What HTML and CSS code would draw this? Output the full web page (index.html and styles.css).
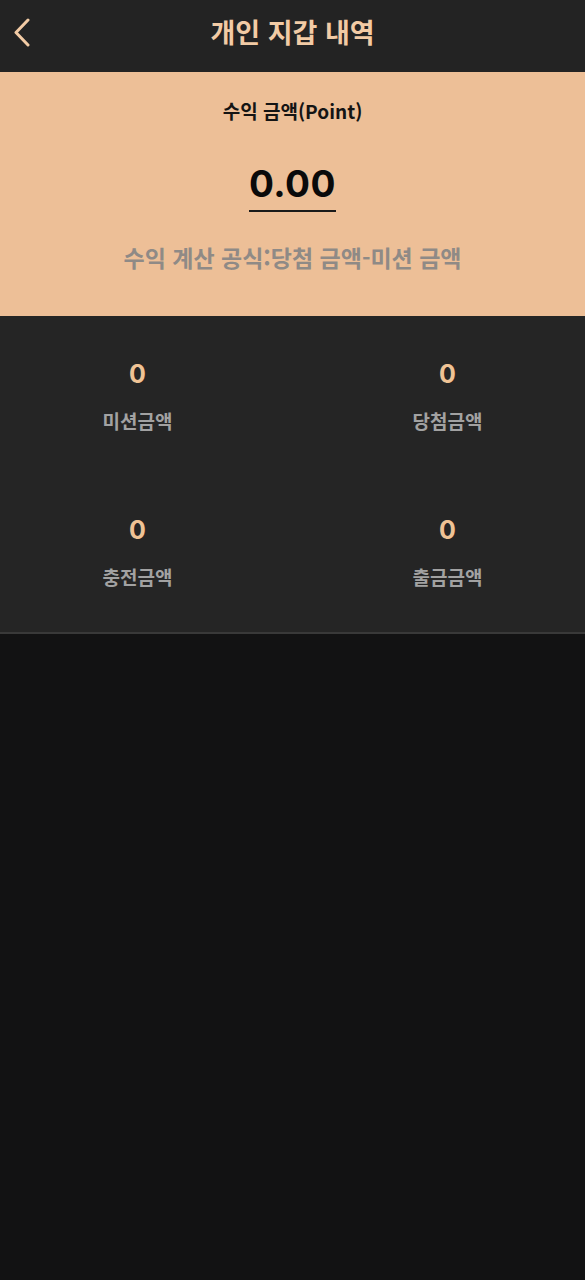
FILE: index.html
```html
<!DOCTYPE html>
<html lang="ko">
<head>
<meta charset="utf-8">
<link rel="stylesheet" href="styles.css">
</head>
<body>
<div class="page">
  <header class="topbar">
    <svg class="back" width="18" height="30" viewBox="0 0 18 30"><path d="M15 3 L3 15.5 L15 28" fill="none" stroke="#f2cba5" stroke-width="3" stroke-linecap="round" stroke-linejoin="round"/></svg>
    <h1 class="title">개인 지갑 내역</h1>
  </header>
  <section class="summary">
    <div class="summary-label">수익 금액(Point)</div>
    <div class="summary-value">0.00</div>
    <div class="summary-formula">수익 계산 공식:당첨 금액-미션 금액</div>
  </section>
  <section class="stats">
    <div class="stat"><div class="stat-num">0</div><div class="stat-label">미션금액</div></div>
    <div class="stat"><div class="stat-num">0</div><div class="stat-label">당첨금액</div></div>
    <div class="stat"><div class="stat-num">0</div><div class="stat-label">충전금액</div></div>
    <div class="stat"><div class="stat-num">0</div><div class="stat-label">출금금액</div></div>
  </section>
</div>
</body>
</html>
```
FILE: styles.css
```css
html, body {
  margin: 0;
  padding: 0;
  background: #121213;
}
body {
  font-family: "Noto Sans CJK KR", "Noto Sans", sans-serif;
}
.page {
  width: 585px;
  min-height: 1280px;
  background: #121213;
}
.topbar {
  position: relative;
  height: 72px;
  background: #232323;
  display: flex;
  align-items: center;
  justify-content: center;
}
.back {
  position: absolute;
  left: 13px;
  top: 17px;
}
.title {
  margin: 0;
  font-size: 27px;
  font-weight: 700;
  color: #f2cba5;
  line-height: 1;
  margin-top: -9px;
}
.summary {
  height: 244px;
  background: #edbf97;
  display: flex;
  flex-direction: column;
  align-items: center;
  box-sizing: border-box;
  padding-top: 26px;
}
.summary-label {
  font-size: 19px;
  font-weight: 700;
  color: #141414;
  line-height: 26px;
}
.summary-value {
  margin-top: 38px;
  font-family: "Inter", "Noto Sans", sans-serif;
  font-size: 37px;
  font-weight: 700;
  color: #0a0a0a;
  line-height: 44px;
  padding-bottom: 4px;
  border-bottom: 2px solid #1a1a1a;
  letter-spacing: 0.5px;
}
.summary-formula {
  margin-top: 30px;
  font-size: 23px;
  font-weight: 700;
  color: #8f8a86;
  line-height: 30px;
}
.stats {
  background: #252525;
  height: 318px;
  box-sizing: border-box;
  border-bottom: 2px solid #393939;
  display: grid;
  grid-template-columns: 1fr 1fr;
  column-gap: 65px;
  row-gap: 78px;
  padding: 40px 15px 0;
  align-content: start;
}
.stat {
  display: flex;
  flex-direction: column;
  align-items: center;
}
.stat-num {
  font-family: "Inter", "Noto Sans", sans-serif;
  font-size: 25px;
  font-weight: 700;
  color: #f0c395;
  line-height: 36px;
}
.stat-label {
  margin-top: 16px;
  font-size: 19px;
  font-weight: 700;
  color: #a2a2a2;
  line-height: 26px;
}
```
